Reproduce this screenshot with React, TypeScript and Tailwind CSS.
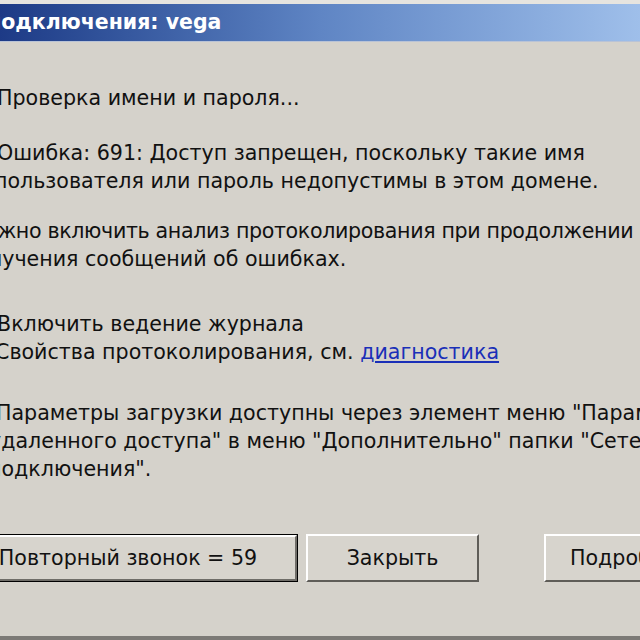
export default function App() {
  return (
    <div className="flex h-[640px] w-[640px] flex-col overflow-hidden bg-[#d5d2cb] font-['DejaVu_Sans',Verdana,sans-serif] text-[#111]">
      <div className="h-[4px] shrink-0 bg-[#e6e4df]" />
      <div className="flex h-[38px] shrink-0 items-center border-b border-[#b9c3d6] bg-gradient-to-r from-[#1d3a86] via-[#5f85c4] to-[#9fbfea]">
        <span className="ml-[-13px] whitespace-nowrap text-[20.5px] font-bold leading-none text-white">
          подключения: vega
        </span>
      </div>

      <div className="flex flex-col pt-[42px] text-[20.6px] leading-[28px] whitespace-nowrap">
        <p className="ml-[-3px]">Проверка имени и пароля...</p>

        <div className="mt-[27px] flex flex-col">
          <p className="ml-[-3px]">Ошибка: 691: Доступ запрещен, поскольку такие имя</p>
          <p className="ml-[-6px]">пользователя или пароль недопустимы в этом домене.</p>
        </div>

        <div className="mt-[22px] flex flex-col">
          <p className="ml-[-32px] tracking-[-0.35px]">Можно включить анализ протоколирования при продолжении</p>
          <p className="ml-[-37px]">получения сообщений об ошибках.</p>
        </div>

        <div className="mt-[37px] flex flex-col">
          <p className="ml-[-3px]">Включить ведение журнала</p>
          <p className="ml-[-5px]">
            Свойства протоколирования, см.{" "}
            <span className="text-[#1a2fb8] underline">диагностика</span>
          </p>
        </div>

        <div className="mt-[33px] flex flex-col">
          <p className="ml-[-4px]">Параметры загрузки доступны через элемент меню "Параметры</p>
          <p className="ml-[-11px]">удаленного доступа" в меню "Дополнительно" папки "Сетевые</p>
          <p className="ml-[-12px]">подключения".</p>
        </div>
      </div>

      <div className="mt-[51px] flex items-start text-[20.6px] leading-none">
        <div className="ml-[-20px] shrink-0 border border-black">
          <button className="flex h-[46px] w-[316px] items-center justify-center border-2 border-t-white border-l-white border-r-[#6f6d68] border-b-[#6f6d68] bg-[#d7d4cd] pr-[22px]">
            Повторный звонок = 59
          </button>
        </div>
        <button className="ml-[8px] flex h-[48px] w-[173px] shrink-0 items-center justify-center border-2 border-t-white border-l-white border-r-[#5f5d58] border-b-[#5f5d58] bg-[#d7d4cd]">
          Закрыть
        </button>
        <button className="ml-[65px] flex h-[48px] w-[173px] shrink-0 items-center justify-start border-2 border-t-white border-l-white border-r-[#5f5d58] border-b-[#5f5d58] bg-[#d7d4cd] pl-[24px]">
          Подробности
        </button>
      </div>

      <div className="mt-auto h-[4px] shrink-0 bg-[#7c7a76]" />
    </div>
  );
}
